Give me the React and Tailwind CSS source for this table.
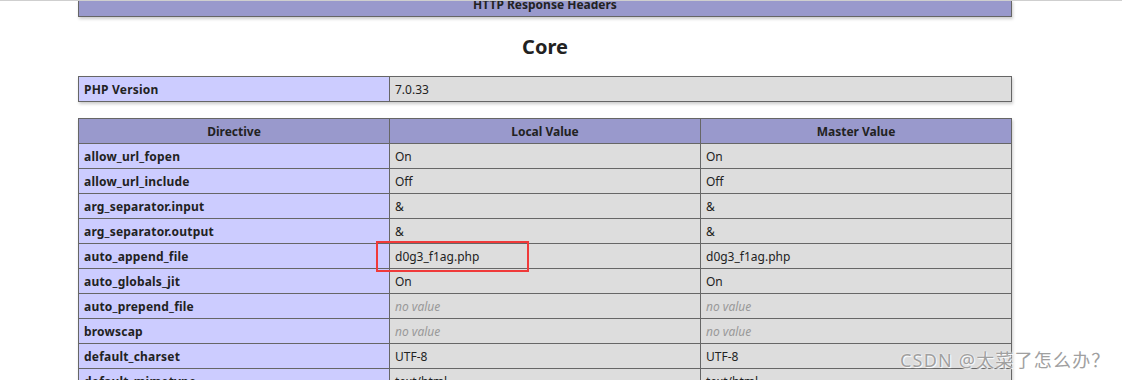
const rows = [
  ['allow_url_fopen', 'On', 'On'],
  ['allow_url_include', 'Off', 'Off'],
  ['arg_separator.input', '&', '&'],
  ['arg_separator.output', '&', '&'],
  ['auto_append_file', 'd0g3_f1ag.php', 'd0g3_f1ag.php'],
  ['auto_globals_jit', 'On', 'On'],
  ['auto_prepend_file', null, null],
  ['browscap', null, null],
  ['default_charset', 'UTF-8', 'UTF-8'],
  ['default_mimetype', 'text/html', 'text/html'],
];

const cell = 'border border-[#666] px-[5px] pt-[5px] pb-[3px] leading-[16px] text-[12px] align-baseline';

function Value({ v }) {
  if (v === null) return <i className="text-[#999]">no value</i>;
  return v;
}

export default function App() {
  return (
    <div className="relative w-[1122px] h-[380px] overflow-hidden bg-white text-[#222]" style={{ fontFamily: '"Noto Sans", "Open Sans", sans-serif' }}>
      {/* browser edge line */}
      <div className="absolute top-0 left-0 w-full h-px bg-[#cfcfcf]" />

      <div className="w-[1090px]">
        {/* header bar, scrolled mostly off screen */}
        <div className="mx-auto w-[934px] h-[17px] overflow-hidden border-x border-b border-[#666] bg-[#9999cc] shadow-[1px_2px_3px_#ccc]">
          <div className="-mt-[3px] text-center font-bold text-[12px] leading-[16px]">HTTP Response Headers</div>
        </div>

        <h2 className="mt-[16px] text-center font-bold text-[20px] leading-[28px]">Core</h2>

        <table className="mx-auto mt-[15px] w-[934px] table-fixed border-collapse shadow-[1px_2px_3px_#ccc]">
          <colgroup>
            <col className="w-[311px]" />
            <col />
          </colgroup>
          <tbody>
            <tr>
              <td className={`${cell} bg-[#ccccff] font-bold tracking-[0.2px]`}>PHP Version</td>
              <td className={`${cell} bg-[#dddddd]`}>7.0.33</td>
            </tr>
          </tbody>
        </table>

        <table className="mx-auto mt-[16px] w-[934px] table-fixed border-collapse shadow-[1px_2px_3px_#ccc]">
          <colgroup>
            <col className="w-[311px]" />
            <col className="w-[311px]" />
            <col />
          </colgroup>
          <tbody>
            <tr className="bg-[#9999cc]">
              <th className={`${cell} font-bold text-center`}>Directive</th>
              <th className={`${cell} font-bold text-center`}>Local Value</th>
              <th className={`${cell} font-bold text-center`}>Master Value</th>
            </tr>
            {rows.map(([name, local, master]) => (
              <tr key={name}>
                <td className={`${cell} bg-[#ccccff] font-bold tracking-[0.2px]`}>{name}</td>
                <td className={`${cell} bg-[#dddddd]`}><Value v={local} /></td>
                <td className={`${cell} bg-[#dddddd]`}><Value v={master} /></td>
              </tr>
            ))}
          </tbody>
        </table>
      </div>

      {/* red highlight box */}
      <div className="absolute left-[376px] top-[241px] w-[153px] h-[31px] border-2 border-[#f03a3a]" />

      {/* watermark */}
      <div
        className="absolute left-[900px] top-[348px] text-[18px] leading-[24px] tracking-[1.2px] text-[#a0a0a0] [text-shadow:0_0_2px_#fff,1px_1px_1px_#fff]"
        style={{ fontFamily: '"Noto Sans", "Noto Sans CJK SC", sans-serif' }}
      >
        CSDN @太菜了怎么办？
      </div>
    </div>
  );
}
